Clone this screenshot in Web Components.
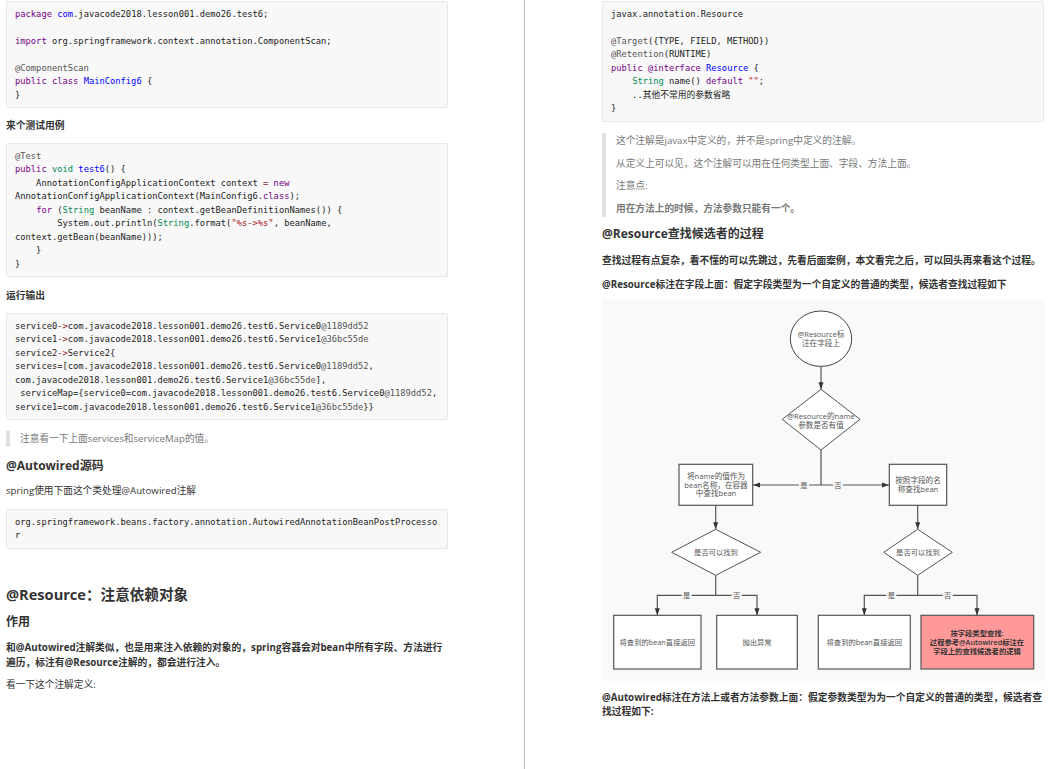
<!DOCTYPE html>
<html><head><meta charset="utf-8"><style>
html,body{margin:0;padding:0;background:#fff;height:769px;overflow:hidden}
body{font-family:"Open Sans","Noto Sans CJK SC",sans-serif;font-size:9.6px;color:#333}
</style></head><body>
<doc-spread>
<doc-page slot="left">
<code-block style="margin-top:1px"><span class="k">package</span> <span class="b">com</span>.javacode2018.lesson001.demo26.test6;

<span class="k">import</span> org.springframework.context.annotation.ComponentScan;

<span class="m">@ComponentScan</span>
<span class="k">public</span> <span class="k">class</span> <span class="b">MainConfig6</span> {
}</code-block>
<doc-text kind="b" style="margin-top:10px">来个测试用例</doc-text>
<code-block style="margin-top:10px"><span class="m">@Test</span>
<span class="k">public</span> <span class="g">void</span> <span class="b">test6</span>() {
    AnnotationConfigApplicationContext context <span class="o">=</span> <span class="k">new</span>
AnnotationConfigApplicationContext(MainConfig6.<span class="k">class</span>);
    <span class="k">for</span> (<span class="g">String</span> beanName : context.getBeanDefinitionNames()) {
        System.out.println(<span class="g">String</span>.format(<span class="r">"%s-&gt;%s"</span>, beanName,
context.getBean(beanName)));
    }
}</code-block>
<doc-text kind="b" style="margin-top:11px">运行输出</doc-text>
<code-block style="margin-top:9.5px">service0<span class="o">-&gt;</span>com.javacode2018.lesson001.demo26.test6.Service0<span class="m">@1189dd52</span>
service1<span class="o">-&gt;</span>com.javacode2018.lesson001.demo26.test6.Service1<span class="m">@36bc55de</span>
service2<span class="o">-&gt;</span>Service2{
services=[com.javacode2018.lesson001.demo26.test6.Service0<span class="m">@1189dd52</span>,
com.javacode2018.lesson001.demo26.test6.Service1<span class="m">@36bc55de</span>],
 serviceMap={service0=com.javacode2018.lesson001.demo26.test6.Service0<span class="m">@1189dd52</span>,
service1=com.javacode2018.lesson001.demo26.test6.Service1<span class="m">@36bc55de</span>}}</code-block>
<doc-quote style="margin-top:11px"><doc-text kind="q">注意看一下上面services和serviceMap的值。</doc-text></doc-quote>
<doc-text kind="h3" style="margin-top:10.2px">@Autowired源码</doc-text>
<doc-text style="margin-top:8px">spring使用下面这个类处理@Autowired注解</doc-text>
<code-block style="margin-top:11px">org.springframework.beans.factory.annotation.AutowiredAnnotationBeanPostProcesso
r</code-block>
<doc-text kind="h2" style="margin-top:35.4px">@Resource&#xFF1A;注意依赖对象</doc-text>
<doc-text kind="h3" style="margin-top:9.2px">作用</doc-text>
<doc-text kind="b" style="margin-top:8.9px">和@Autowired注解类似&#xFF0C;也是用来注入依赖的对象的&#xFF0C;spring容器会对bean中所有字段、方法进行遍历&#xFF0C;标注有@Resource注解的&#xFF0C;都会进行注入。</doc-text>
<doc-text style="margin-top:6.3px">看一下这个注解定义:</doc-text>
</doc-page>
<doc-page slot="right">
<code-block style="margin-top:1px">javax.annotation.Resource

<span class="m">@Target</span>({TYPE, FIELD, METHOD})
<span class="m">@Retention</span>(RUNTIME)
<span class="k">public</span> <span class="k">@interface</span> <span class="b">Resource</span> {
    <span class="g">String</span> name() <span class="k">default</span> <span class="r">""</span>;
    ..其他不常用的参数省略
}</code-block>
<doc-quote style="margin-top:11px;padding-top:.5px;padding-bottom:.5px">
<doc-text kind="q">这个注解是javax中定义的&#xFF0C;并不是spring中定义的注解。</doc-text>
<doc-text kind="q" style="margin-top:7.3px">从定义上可以见&#xFF0C;这个注解可以用在任何类型上面、字段、方法上面。</doc-text>
<doc-text kind="q" style="margin-top:7.3px">注意点:</doc-text>
<doc-text kind="qb" style="margin-top:7.3px">用在方法上的时候&#xFF0C;方法参数只能有一个。</doc-text>
</doc-quote>
<doc-text kind="h3" style="margin-top:8px">@Resource查找候选者的过程</doc-text>
<doc-text kind="b" style="margin-top:10.6px">查找过程有点复杂&#xFF0C;看不懂的可以先跳过&#xFF0C;先看后面案例&#xFF0C;本文看完之后&#xFF0C;可以回头再来看这个过程。</doc-text>
<doc-text kind="b" style="margin-top:8.5px">@Resource标注在字段上面&#xFF1A;假定字段类型为一个自定义的普通的类型&#xFF0C;候选者查找过程如下</doc-text>
<flow-chart style="margin-top:6.4px"></flow-chart>
<doc-text kind="b" style="margin-top:9.7px;line-height:14px">@Autowired标注在方法上或者方法参数上面&#xFF1A;假定参数类型为为一个自定义的普通的类型&#xFF0C;候选者查找过程如下:</doc-text>
</doc-page>
</doc-spread>
<script>
function shadow(el,html){el.attachShadow({mode:'open'}).innerHTML=html}
class DocSpread extends HTMLElement{constructor(){super();shadow(this,`<style>
:host{display:grid;grid-template-columns:524px 1px 1fr;width:1050px;height:769px;overflow:hidden}
.l{padding-left:6px}.r{padding-left:77px}
.d{background:#b9b9b9}
</style><div class="l"><slot name="left"></slot></div><div class="d"></div><div class="r"><slot name="right"></slot></div>`)}}
class DocPage extends HTMLElement{constructor(){super();shadow(this,`<style>:host{display:flow-root;width:442px}</style><slot></slot>`)}}
class CodeBlock extends HTMLElement{constructor(){super();shadow(this,`<style>
:host{display:block;box-sizing:border-box;background:#f8f8f8;border:1px solid #e7eaed;border-radius:2px;padding:5.5px 8px 5px;font:8.78px/13.5px "DejaVu Sans Mono","Noto Sans CJK SC",monospace;color:#222;white-space:pre}
::slotted(.k){color:#770088}::slotted(.b){color:#0000ff}::slotted(.m){color:#555555}::slotted(.g){color:#008855}::slotted(.r){color:#aa1111}::slotted(.o){color:#981a1a}
</style><slot></slot>`)}}
class DocQuote extends HTMLElement{constructor(){super();shadow(this,`<style>
:host{display:block;border-left:4px solid #dfe2e5;padding-left:10px;color:#777}
</style><slot></slot>`)}}
class DocText extends HTMLElement{constructor(){super();shadow(this,`<style>
:host{display:block;font-size:9.7px;line-height:15.36px;color:#333}
:host([kind=b]){font-weight:700;font-size:9.76px}
:host([kind=q]){color:#777}
:host([kind=qb]){color:#777;font-weight:700}
:host([kind=h3]){font-size:12px;line-height:18px;font-weight:700}
:host([kind=h2]){font-size:14.6px;line-height:20px;font-weight:700}
</style><slot></slot>`)}}
class FlowChart extends HTMLElement{constructor(){super();
const box=(x1,y1,x2,y2,f='#fff',s='#555')=>`<rect x="${x1}" y="${y1}" width="${x2-x1}" height="${y2-y1}" fill="${f}" stroke="${s}" stroke-width="1.2"/>`;
const dia=(cx,cy,l,r,t,b)=>`<polygon points="${cx},${t} ${r},${cy} ${cx},${b} ${l},${cy}" fill="#fff" stroke="#555" stroke-width="1"/>`;
const line=d=>`<path d="${d}" fill="none" stroke="#555" stroke-width="1.2"/>`;
const ad=(x,y)=>`<path d="M${x-2.5} ${y-7}H${x+2.5}L${x} ${y}Z" fill="#333"/>`;
const ar=(x,y)=>`<path d="M${x-7} ${y-2.5}V${y+2.5}L${x} ${y}Z" fill="#333"/>`;
const al=(x,y)=>`<path d="M${x+7} ${y-2.5}V${y+2.5}L${x} ${y}Z" fill="#333"/>`;
const t=(x,y,s,c='')=>`<text x="${x}" y="${y}" class="${c}">${s}</text>`;
const lab=(x,y,s)=>`<rect x="${x-5}" y="${y-5}" width="10" height="10" fill="#f9f9f9"/>`+t(x,y+2.6,s);
shadow(this,`<style>
:host{display:block;width:443px;height:382px}
svg{display:block;width:443px;height:382px}
text{font:7.3px "Open Sans","Noto Sans CJK SC",sans-serif;fill:#555;text-anchor:middle}
text.c{font-size:7.6px}
text.d{fill:#333;font-weight:600}
</style>
<svg viewBox="602 299 443 382" xmlns="http://www.w3.org/2000/svg">
<rect x="602" y="299" width="443" height="382" fill="#f9f9f9"/>
${line('M821 367V389')}${ad(821,389.3)}
<ellipse cx="821" cy="338.7" rx="30.7" ry="27.7" fill="#fff" stroke="#444" stroke-width="1"/>
${t(821,337,'@Resource标','c')}${t(821,346,'注在字段上','c')}
${dia(821,419.3,782.3,860,389.3,450)}
${t(821,418.5,'@Resource的name','c')}${t(821,427.5,'参数是否有值','c')}
${line('M821 450V485M753 485H889')}${al(753,485)}${ar(889,485)}
${lab(804,485,'是')}${lab(838,485,'否')}
${box(679,464.3,752.7,505.3)}
${t(716,478.5,'将name的值作为','c')}${t(716,487.5,'bean名称&#xFF0C;在容器','c')}${t(716,496,'中查找bean','c')}
${box(889.3,464.3,946.7,505.3)}
${t(918,483.2,'按照字段的名','c')}${t(918,492,'称查找bean','c')}
${line('M715.7 505.3V529M917.7 505.3V529')}${ad(715.7,529.3)}${ad(917.7,529.3)}
${dia(715.7,552.3,671.7,760.7,529.3,575.3)}${t(716,555,'是否可以找到')}
${dia(917.7,552.3,883.7,952.3,529.3,575.3)}${t(918,555,'是否可以找到')}
${line('M715.7 575.3V595.3M657.3 615V595.3H757V615M917.7 575.3V595.3M864.3 615V595.3H977V615')}
${ad(657.3,615.3)}${ad(757,615.3)}${ad(864.3,615.3)}${ad(977,615.3)}
${lab(686.7,595.3,'是')}${lab(736.7,595.3,'否')}${lab(891.3,595.3,'是')}${lab(947.7,595.3,'否')}
${box(613.7,615.3,701,669)}${t(657.3,645.2,'将查到的bean直接返回')}
${box(716.7,615.3,797.3,669)}${t(757,645.2,'抛出异常')}
${box(818.3,615.3,910.3,669)}${t(864.3,645.2,'将查到的bean直接返回')}
${box(921,615.3,1033.7,669,'#ff9999')}
${t(977,636,'按字段类型查找:','d')}${t(977,644.6,'过程参考@Autowired标注在','d')}${t(977,653.5,'字段上的查找候选者的逻辑','d')}
</svg>`)}}
customElements.define('doc-spread',DocSpread);
customElements.define('doc-page',DocPage);
customElements.define('code-block',CodeBlock);
customElements.define('doc-quote',DocQuote);
customElements.define('doc-text',DocText);
customElements.define('flow-chart',FlowChart);
</script>
</body></html>
